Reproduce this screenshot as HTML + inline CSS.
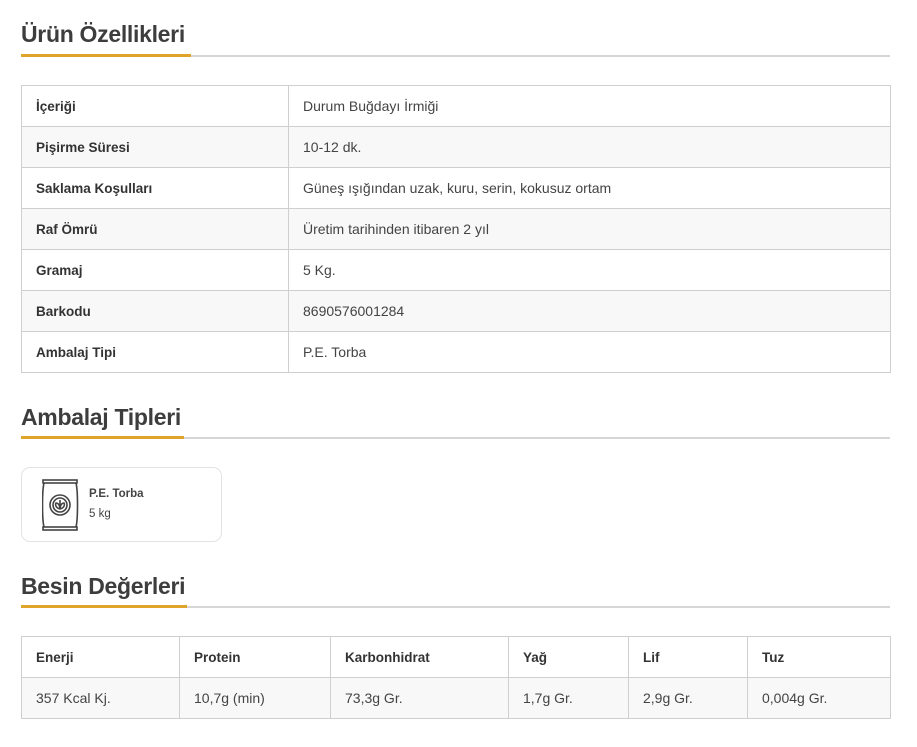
<!DOCTYPE html>
<html><head><meta charset="utf-8"><style>
body{margin:0;background:#fff;width:917px;height:747px;overflow:hidden;font-family:"Liberation Sans",Arial,sans-serif;color:#444;}
h2{position:absolute;left:21px;margin:0;font-size:23px;font-weight:bold;color:#3d3d3d;letter-spacing:-0.3px;}
.line{position:absolute;left:21px;width:869px;height:2px;background:#d6d6d6;}
.line i{position:absolute;left:0;top:-1px;height:3px;background:#e0a42a;}
table{position:absolute;left:21px;width:870px;border-collapse:collapse;font-size:14px;}
td{border:1px solid #cfcfcf;height:41px;padding:0 0 0 14px;box-sizing:border-box;}
tr:nth-child(even) td{background:#f8f8f8;}
td.b{font-weight:bold;color:#333;font-size:13.5px;}
.card{position:absolute;left:21px;top:467px;width:201px;height:75px;border:1px solid #e3e3e3;border-radius:9px;box-sizing:border-box;}
</style></head><body>
<h2 style="top:21px">Ürün Özellikleri</h2>
<div class="line" style="top:55px"><i style="width:170px"></i></div>
<table style="top:85px">
<tr><td class="b" style="width:267px">İçeriği</td><td>Durum Buğdayı İrmiği</td></tr>
<tr><td class="b">Pişirme Süresi</td><td>10-12 dk.</td></tr>
<tr><td class="b">Saklama Koşulları</td><td>Güneş ışığından uzak, kuru, serin, kokusuz ortam</td></tr>
<tr><td class="b">Raf Ömrü</td><td>Üretim tarihinden itibaren 2 yıl</td></tr>
<tr><td class="b">Gramaj</td><td>5 Kg.</td></tr>
<tr><td class="b">Barkodu</td><td>8690576001284</td></tr>
<tr><td class="b">Ambalaj Tipi</td><td>P.E. Torba</td></tr>
</table>
<h2 style="top:404px">Ambalaj Tipleri</h2>
<div class="line" style="top:437px"><i style="width:163px"></i></div>
<div class="card">
<svg style="position:absolute;left:20px;top:11px" width="38" height="53" viewBox="0 0 38 53" fill="none" stroke="#444" stroke-width="1.6">
<rect x="1" y="1" width="34" height="3"/><rect x="1" y="48" width="34" height="3"/>
<path d="M2 4 C0 12 0 40 2 48 M34 4 C36 12 36 40 34 48"/>
<circle cx="18" cy="26" r="10"/><circle cx="18" cy="26" r="7"/>
<path d="M18 30 C14 29 13 26 14 24 C16 24 18 26 18 30 C18 26 20 24 22 24 C23 26 22 29 18 30 M18 28 V21"/>
</svg>
<div style="position:absolute;left:67px;top:20px;font-size:11.5px;font-weight:bold;color:#444">P.E. Torba</div>
<div style="position:absolute;left:67px;top:40px;font-size:11.5px;color:#444">5 kg</div>
</div>
<h2 style="top:573px">Besin Değerleri</h2>
<div class="line" style="top:606px"><i style="width:166px"></i></div>
<table style="top:636px">
<tr><td class="b" style="width:158px">Enerji</td><td class="b" style="width:151px">Protein</td><td class="b" style="width:178px">Karbonhidrat</td><td class="b" style="width:120px">Yağ</td><td class="b" style="width:119px">Lif</td><td class="b">Tuz</td></tr>
<tr><td>357 Kcal Kj.</td><td>10,7g (min)</td><td>73,3g Gr.</td><td>1,7g Gr.</td><td>2,9g Gr.</td><td>0,004g Gr.</td></tr>
</table>
</body></html>
